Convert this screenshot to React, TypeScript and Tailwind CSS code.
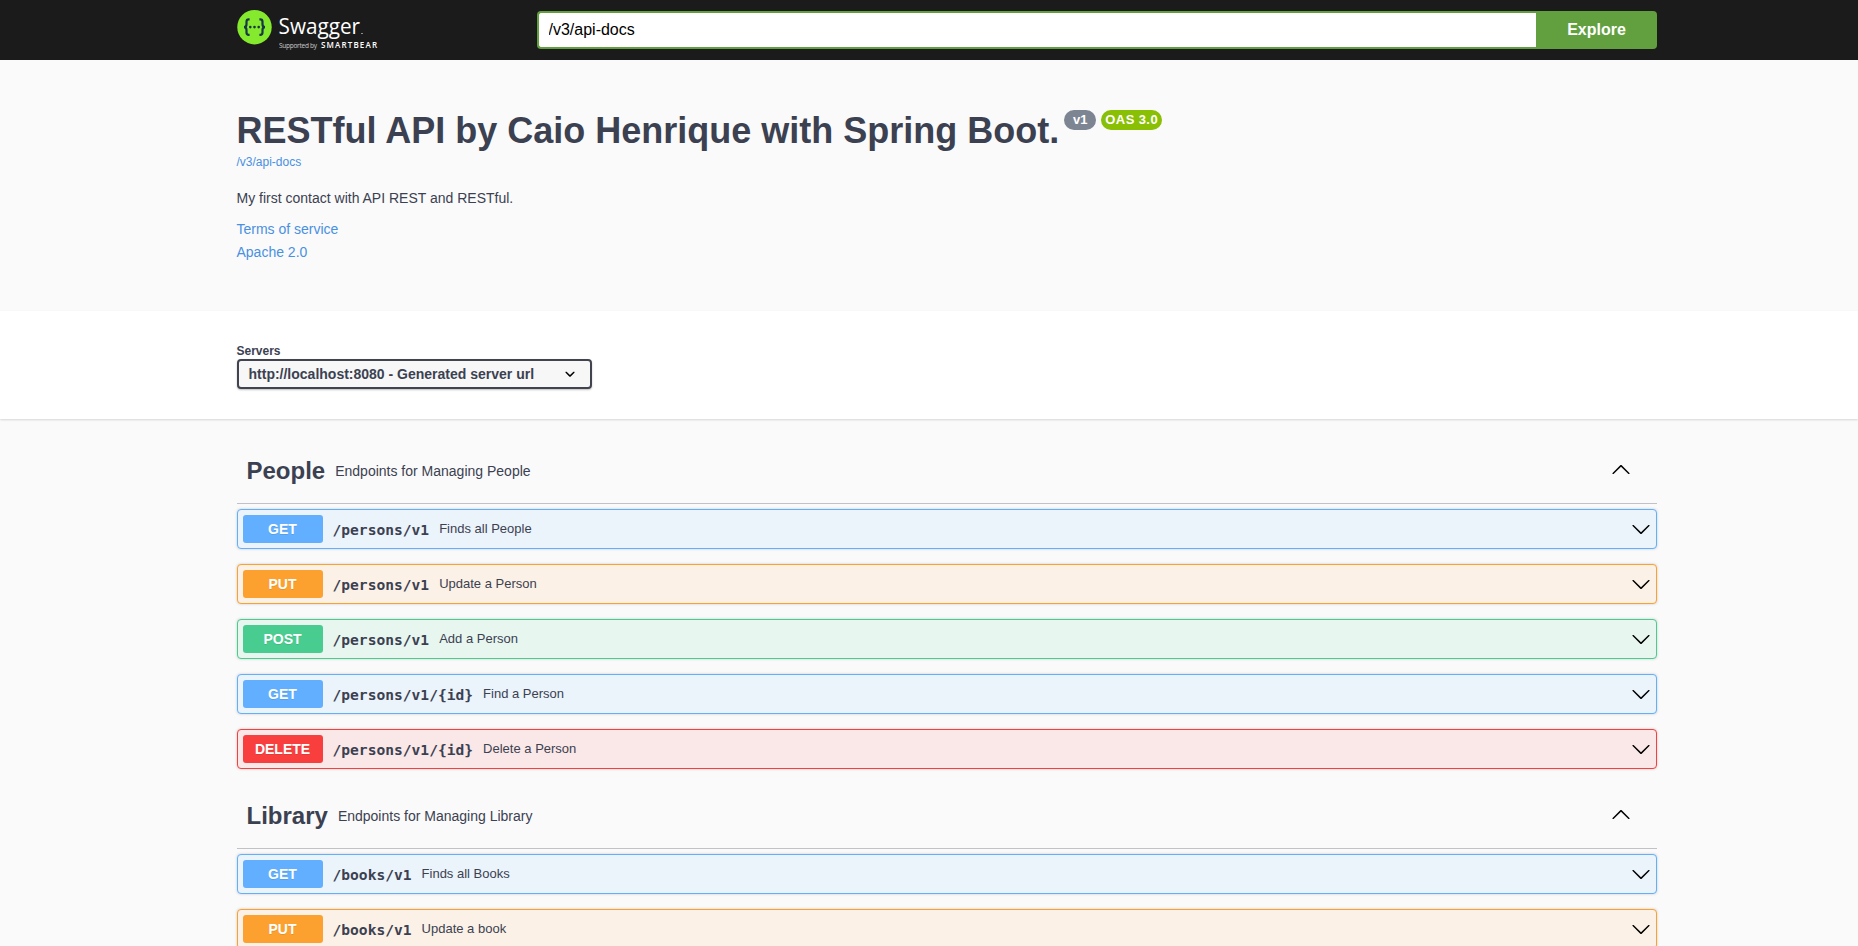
import React from "react";

type Method = "GET" | "PUT" | "POST" | "DELETE";

interface Operation {
  method: Method;
  path: string;
  summary: string;
}

interface Tag {
  name: string;
  description: string;
  operations: Operation[];
}

const tags: Tag[] = [
  {
    name: "People",
    description: "Endpoints for Managing People",
    operations: [
      { method: "GET", path: "/persons/v1", summary: "Finds all People" },
      { method: "PUT", path: "/persons/v1", summary: "Update a Person" },
      { method: "POST", path: "/persons/v1", summary: "Add a Person" },
      { method: "GET", path: "/persons/v1/{id}", summary: "Find a Person" },
      { method: "DELETE", path: "/persons/v1/{id}", summary: "Delete a Person" },
    ],
  },
  {
    name: "Library",
    description: "Endpoints for Managing Library",
    operations: [
      { method: "GET", path: "/books/v1", summary: "Finds all Books" },
      { method: "PUT", path: "/books/v1", summary: "Update a book" },
    ],
  },
];

const rowStyles: Record<Method, string> = {
  GET: "border-[#61affe] bg-[#ebf3fb]",
  PUT: "border-[#fca130] bg-[#fbf1e6]",
  POST: "border-[#49cc90] bg-[#e8f6f0]",
  DELETE: "border-[#f93e3e] bg-[#fae7e7]",
};

const badgeStyles: Record<Method, string> = {
  GET: "bg-[#61affe]",
  PUT: "bg-[#fca130]",
  POST: "bg-[#49cc90]",
  DELETE: "bg-[#f93e3e]",
};

function Chevron({ up = false }: { up?: boolean }) {
  return (
    <svg viewBox="0 0 20 20" className={up ? "mb-[3px] size-5 rotate-180" : "size-5"} aria-hidden="true">
      <path d="M17.418 6.109c.272-.268.709-.268.979 0s.271.701 0 .969l-7.908 7.83c-.27.268-.707.268-.979 0l-7.908-7.83c-.27-.268-.27-.701 0-.969.271-.268.709-.268.979 0L10 13.25l7.418-7.141z" />
    </svg>
  );
}

function Logo() {
  return (
    <svg width="144" height="40" viewBox="0 0 144 40" aria-label="Swagger">
      <circle cx="17.5" cy="17.2" r="17.2" fill="#85ea2d" />
      <g fill="none" stroke="#173647" strokeWidth="2.2">
        <path d="M12.6 9.4H11.8C10.2 9.4 9.5 10.2 9.5 11.7V14.3C9.5 16.2 8.9 17.1 7 17.1C8.9 17.1 9.5 18 9.5 19.9V22.5C9.5 24 10.2 24.8 11.8 24.8H12.6" />
        <path d="M22.4 9.4H23.2C24.8 9.4 25.5 10.2 25.5 11.7V14.3C25.5 16.2 26.1 17.1 28 17.1C26.1 17.1 25.5 18 25.5 19.9V22.5C25.5 24 24.8 24.8 23.2 24.8H22.4" />
      </g>
      <g fill="#173647">
        <circle cx="13.3" cy="17.1" r="1.3" />
        <circle cx="17.5" cy="17.1" r="1.3" />
        <circle cx="21.7" cy="17.1" r="1.3" />
      </g>
      <g fill="#fff" fontFamily="'Open Sans', sans-serif">
        <text x="41.6" y="24" fontSize="22.5" textLength="81.5" lengthAdjust="spacingAndGlyphs">Swagger</text>
        <rect x="124" y="23" width="2" height="1" opacity=".5" />
        <text x="42" y="38" fontSize="6.5" textLength="38" opacity=".75">Supported by</text>
        <text x="84" y="38" fontSize="8" fontWeight="600" textLength="56">SMARTBEAR</text>
      </g>
    </svg>
  );
}

function OperationRow({ method, path, summary }: Operation) {
  return (
    <div className={`mb-[15px] flex h-10 items-center rounded-[4px] border p-[5px] shadow-[0_0_3px_rgba(0,0,0,0.19)] ${rowStyles[method]}`}>
      <span className={`h-7 w-20 rounded-[3px] text-center text-sm leading-7 font-bold text-white [text-shadow:0_1px_0_rgba(0,0,0,0.1)] ${badgeStyles[method]}`}>
        {method}
      </span>
      <span className="pt-0.5 pl-2.5 font-['DejaVu_Sans_Mono',monospace] text-[14.6px] font-bold">{path}</span>
      <span className="flex-1 pl-2.5 text-[13px]">{summary}</span>
      <Chevron />
    </div>
  );
}

export default function App() {
  return (
    <div className="h-[946px] w-full overflow-hidden bg-[#fafafa] font-['Liberation_Sans',Arial,sans-serif] text-[#3b4151]">
      <header className="h-[60px] bg-[#1b1b1b] pl-[236.5px]">
        <div className="flex h-full w-[1420px] items-start">
          <div className="w-[300px] pt-2.5">
            <Logo />
          </div>
          <form className="mt-[11px] flex h-[38px] flex-1">
            <input
              className="min-w-0 flex-1 rounded-l-[4px] border-2 border-r-0 border-[#62a03f] bg-white px-2.5 text-base text-black outline-none"
              defaultValue="/v3/api-docs"
            />
            <button type="button" className="w-[121px] rounded-r-[4px] bg-[#62a03f] pl-px text-base font-bold text-white">
              Explore
            </button>
          </form>
        </div>
      </header>

      <section className="h-[251px] pt-[50px] pl-[236.5px]">
        <div className="flex items-start">
          <h1 className="text-[36px] leading-[42px] font-bold">RESTful API by Caio Henrique with Spring Boot.</h1>
          <span className="ml-[5px] h-5 w-8 rounded-full bg-[#7d8492] text-center text-[13px] leading-5 font-bold text-white">v1</span>
          <span className="ml-[5px] h-5 w-[61px] rounded-full bg-[#89bf04] text-center text-[13px] leading-5 font-bold tracking-[0.4px] text-white">OAS 3.0</span>
        </div>
        <div className="text-xs leading-[20px] text-[#4990e2]">/v3/api-docs</div>
        <p className="mt-4 text-sm leading-5">My first contact with API REST and RESTful.</p>
        <div className="mt-2.5 text-sm leading-[23px] text-[#4990e2]">
          <div>Terms of service</div>
          <div>Apache 2.0</div>
        </div>
      </section>

      <section className="h-[108px] bg-white pt-8 pl-[236.5px] shadow-[0_1px_2px_rgba(0,0,0,0.15)]">
        <div className="text-xs leading-4 font-bold">Servers</div>
        <div className="flex h-[30px] w-[355px] items-center justify-between rounded-[4px] border-2 border-[#41444e] bg-[#f7f7f7] pr-2.5 pl-2.5 text-sm font-bold shadow-[0_1px_2px_rgba(0,0,0,0.25)]">
          <span>http://localhost:8080 - Generated server url</span>
          <svg viewBox="0 0 20 20" className="size-5" aria-hidden="true">
            <path d="M13.418 7.859c.271-.268.709-.268.978 0 .27.268.272.701 0 .969l-3.908 3.83c-.27.268-.707.268-.979 0l-3.908-3.83c-.27-.267-.27-.701 0-.969.271-.268.709-.268.978 0L10 11l3.418-3.141z" />
          </svg>
        </div>
      </section>

      <main className="ml-[236.5px] w-[1420px] pt-5">
        {tags.map((tag) => (
          <section key={tag.name}>
            <div className="mb-[5px] flex h-[65px] items-center border-b border-[#3b4151]/30 pr-[26px] pl-2.5">
              <h2 className="text-2xl font-bold">{tag.name}</h2>
              <span className="flex-1 pl-2.5 text-sm">{tag.description}</span>
              <Chevron up />
            </div>
            {tag.operations.map((op) => (
              <OperationRow key={op.method + op.path} {...op} />
            ))}
          </section>
        ))}
      </main>
    </div>
  );
}
